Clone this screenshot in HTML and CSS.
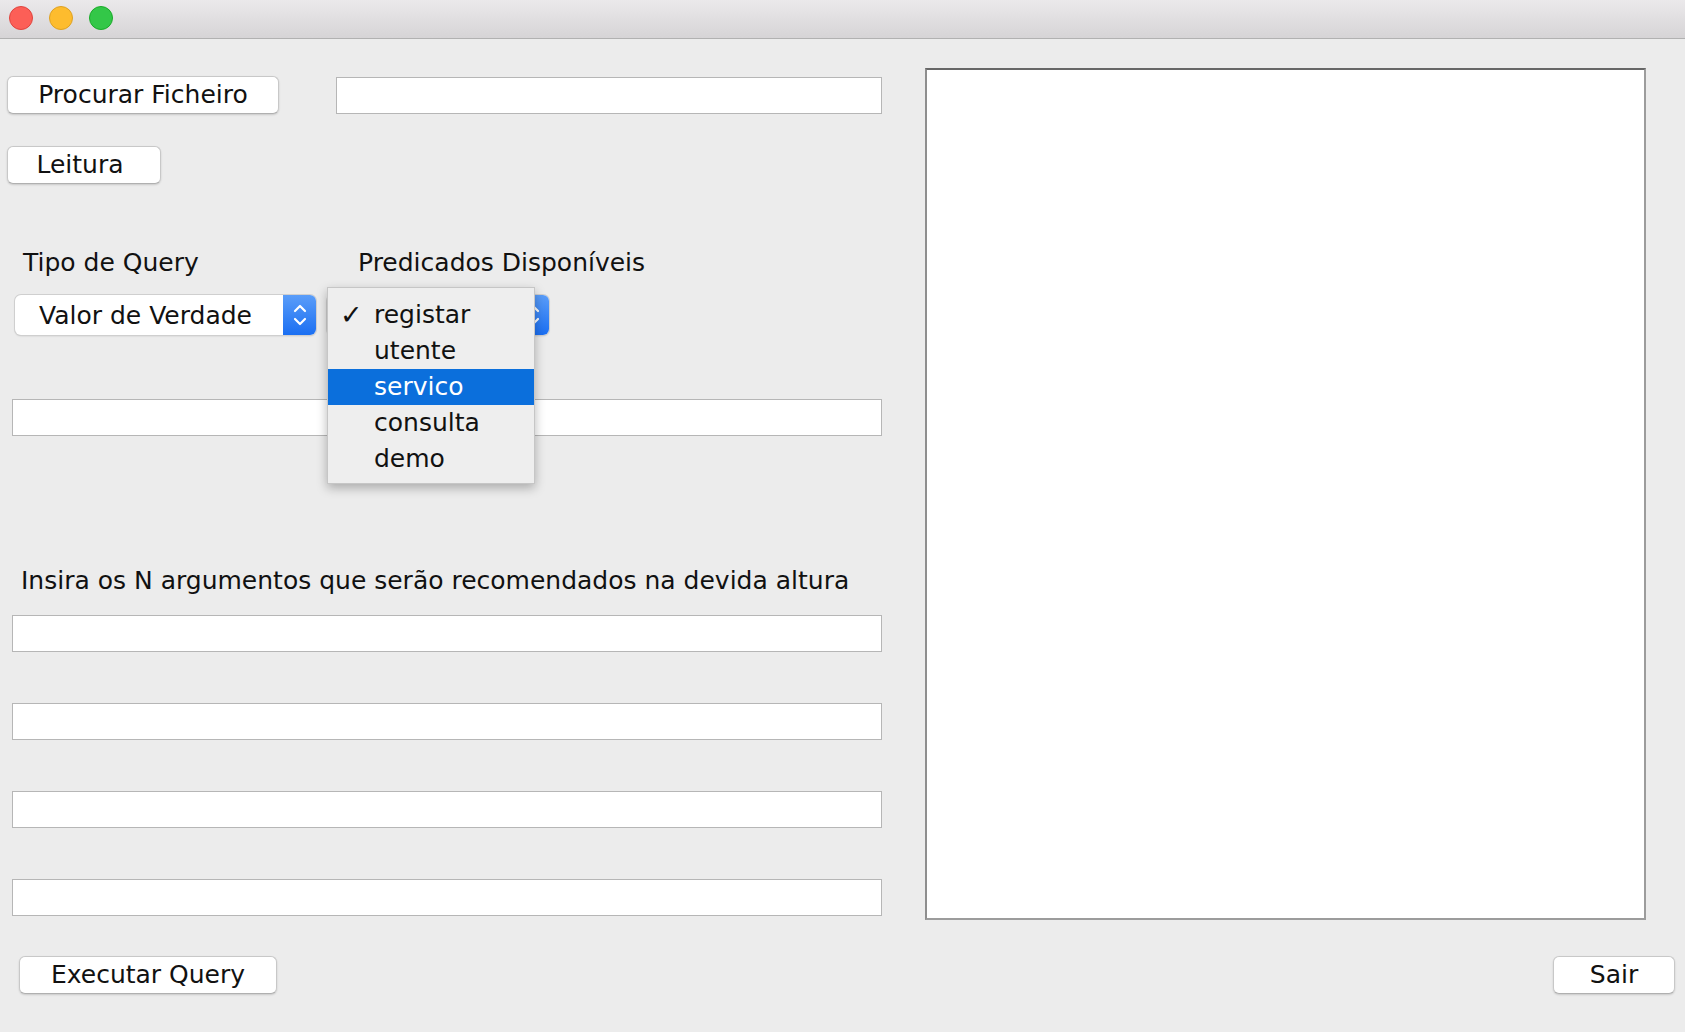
FILE: index.html
```html
<!DOCTYPE html>
<html lang="pt">
<head>
<meta charset="utf-8">
<title>Query</title>
<link rel="stylesheet" href="styles.css">
</head>
<body>
<div class="window">
  <div class="titlebar">
    <span class="light red"></span>
    <span class="light yellow"></span>
    <span class="light green"></span>
  </div>
  <div class="content">
    <div class="left">
      <div class="row file-row">
        <button class="btn btn-file">Procurar Ficheiro</button>
        <div class="field field-file"></div>
      </div>
      <div class="row">
        <button class="btn btn-read">Leitura</button>
      </div>
      <div class="row labels">
        <span class="label label-tipo">Tipo de Query</span>
        <span class="label label-pred">Predicados Disponíveis</span>
      </div>
      <div class="row combos">
        <div class="combo combo-tipo">
          <span class="combo-text">Valor de Verdade</span>
          <span class="combo-arrow">
            <svg width="14" height="24" viewBox="0 0 14 24"><path d="M2 8 L7 3 L12 8 M2 16 L7 21 L12 16" fill="none" stroke="#fff" stroke-width="2.2" stroke-linecap="round" stroke-linejoin="round"/></svg>
          </span>
        </div>
        <div class="combo combo-pred">
          <span class="combo-text"></span>
          <span class="combo-arrow">
            <svg width="14" height="24" viewBox="0 0 14 24"><path d="M2 8 L7 3 L12 8 M2 16 L7 21 L12 16" fill="none" stroke="#fff" stroke-width="2.2" stroke-linecap="round" stroke-linejoin="round"/></svg>
          </span>
          <ul class="menu">
            <li class="menu-item"><span class="check">✓</span>registar</li>
            <li class="menu-item">utente</li>
            <li class="menu-item selected">servico</li>
            <li class="menu-item">consulta</li>
            <li class="menu-item">demo</li>
          </ul>
        </div>
      </div>
      <div class="field field-wide field-query"></div>
      <div class="label label-insira">Insira os N argumentos que serão recomendados na devida altura</div>
      <div class="field field-wide field-arg first"></div>
      <div class="field field-wide field-arg"></div>
      <div class="field field-wide field-arg"></div>
      <div class="field field-wide field-arg"></div>
      <button class="btn btn-exec">Executar Query</button>
    </div>
    <div class="right">
      <div class="output"></div>
      <button class="btn btn-exit">Sair</button>
    </div>
  </div>
</div>
</body>
</html>
```

FILE: styles.css
```css
* { box-sizing: border-box; }

html, body {
  margin: 0;
  padding: 0;
  width: 1685px;
  height: 1032px;
  overflow: hidden;
  background: #ececec;
  font-family: "DejaVu Sans", "Liberation Sans", sans-serif;
  font-size: 25px;
  color: #111;
}

.window {
  width: 1685px;
  height: 1032px;
  display: flex;
  flex-direction: column;
}

.titlebar {
  height: 39px;
  flex: none;
  background: linear-gradient(#ebe9eb, #d6d4d6);
  border-bottom: 1px solid #b1b1b1;
  display: flex;
  align-items: flex-start;
  padding: 6px 0 0 9px;
  gap: 16px;
}

.light {
  width: 24px;
  height: 24px;
  border-radius: 50%;
  display: block;
}
.light.red { background: #fc5f57; border: 1px solid #e0443e; }
.light.yellow { background: #fdbc2e; border: 1px solid #dea123; }
.light.green { background: #33c748; border: 1px solid #1aab29; }

.content {
  flex: 1;
  display: flex;
}

.left {
  width: 900px;
  display: flex;
  flex-direction: column;
  align-items: flex-start;
}

.row {
  display: flex;
  align-items: center;
}

.btn {
  font-family: inherit;
  font-size: 25px;
  color: #111;
  background: #fff;
  border: 1px solid #c8c8c8;
  border-bottom-color: #b0b0b0;
  border-radius: 6px;
  box-shadow: 0 1px 2px rgba(0, 0, 0, 0.15);
  height: 38px;
  padding: 0;
  line-height: 34px;
  text-align: center;
}

.field {
  background: #fff;
  border: 1px solid #b6b6b6;
  height: 37px;
}

.file-row { margin-top: 37px; }
.btn-file { margin-left: 7px; width: 272px; }
.field-file { margin-left: 57px; width: 546px; }

.btn-read { margin-top: 32px; margin-left: 7px; width: 154px; padding-right: 8px; }

.labels {
  margin-top: 64px;
  height: 30px;
  line-height: 30px;
}
.label { line-height: 30px; white-space: nowrap; }
.label-tipo { margin-left: 23px; width: 335px; }

.combos { margin-top: 17px; }

.combo {
  position: relative;
  height: 40px;
  background: #fff;
  border-radius: 6px;
  box-shadow: 0 0 0 1px #cfcfcf, 0 1px 2px rgba(0, 0, 0, 0.18);
  display: flex;
  align-items: center;
}
.combo-tipo { margin-left: 15px; width: 301px; }
.combo-pred { margin-left: 11px; width: 222px; }

.combo-text {
  flex: 1;
  padding-left: 24px;
  white-space: nowrap;
}

.combo-arrow {
  width: 33px;
  height: 40px;
  flex: none;
  border-radius: 0 6px 6px 0;
  background: linear-gradient(#5a9df9, #1b6ff2);
  display: flex;
  align-items: center;
  justify-content: center;
}

.menu {
  position: absolute;
  left: 0;
  top: -8px;
  width: 208px;
  height: 197px;
  margin: 0;
  padding: 9px 0 0 0;
  list-style: none;
  background: #eeeeee;
  border: 1px solid #c6c6c6;
  box-shadow: 0 4px 10px rgba(0, 0, 0, 0.28);
  z-index: 5;
}

.menu-item {
  position: relative;
  height: 36px;
  line-height: 36px;
  padding-left: 46px;
  color: #111;
}
.menu-item.selected {
  background: #0b6fdc;
  color: #fff;
}
.check {
  position: absolute;
  left: 12px;
  top: 0;
  font-size: 27px;
  font-weight: bold;
}

.field-wide { width: 870px; margin-left: 12px; }
.field-query { margin-top: 64px; }

.label-insira {
  margin-top: 130px;
  margin-left: 21px;
}

.field-arg { margin-top: 51px; }
.field-arg.first { margin-top: 19px; }

.btn-exec { margin-top: 40px; margin-left: 19px; width: 258px; }

.right {
  flex: 1;
  display: flex;
  flex-direction: column;
}

.output {
  margin-top: 29px;
  margin-left: 25px;
  width: 721px;
  height: 852px;
  background: #fff;
  border-top: 2px solid #676767;
  border-left: 2px solid #8e8e8e;
  border-right: 2px solid #9c9c9c;
  border-bottom: 2px solid #9c9c9c;
}

.btn-exit {
  margin-top: 36px;
  align-self: flex-end;
  margin-right: 10px;
  width: 122px;
}
```
